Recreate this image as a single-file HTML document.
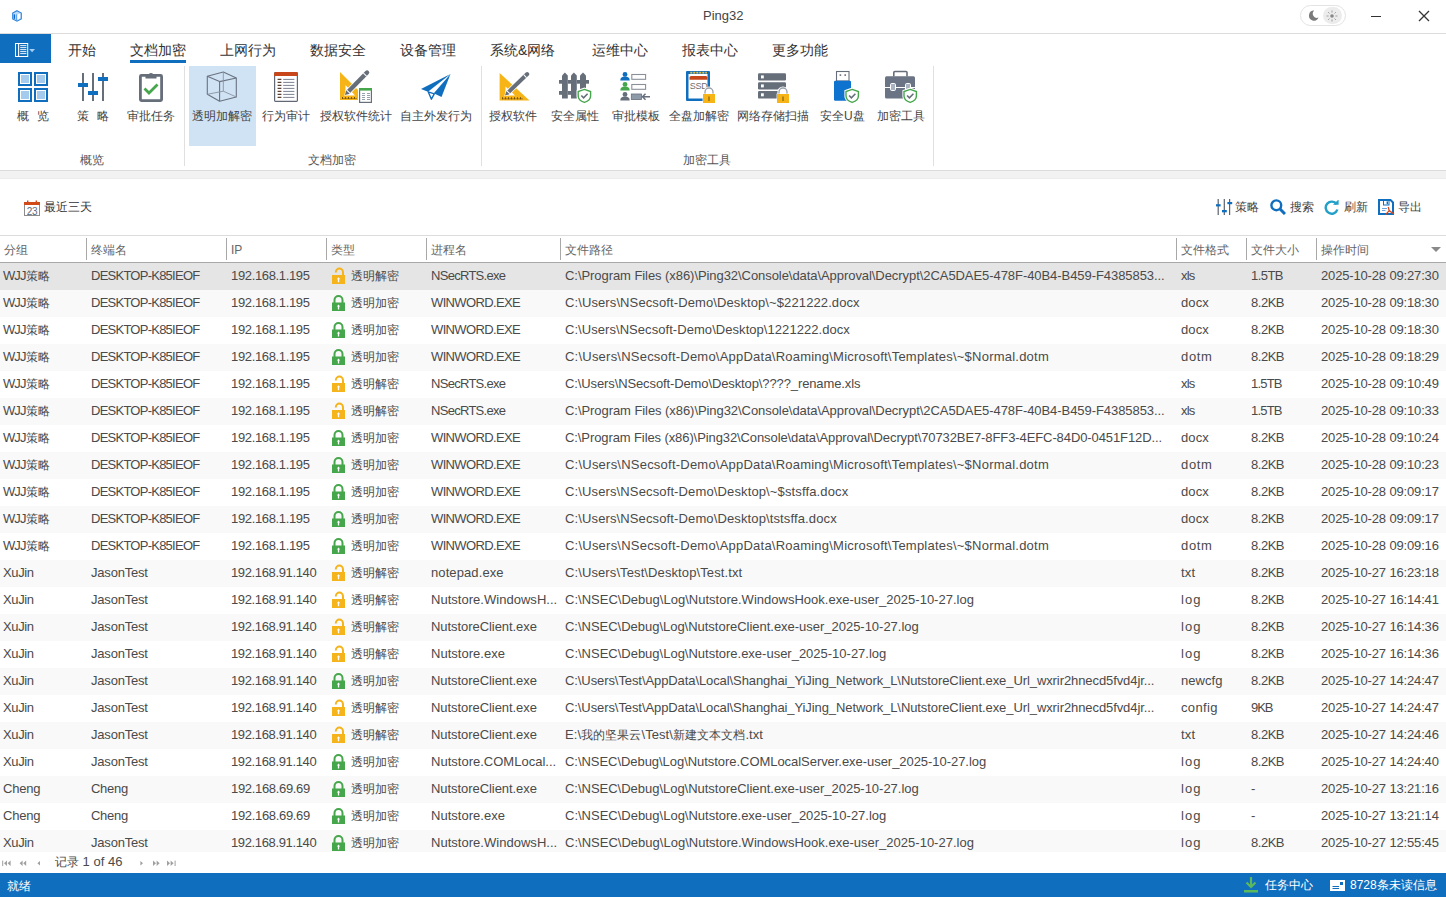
<!DOCTYPE html>
<html><head><meta charset="utf-8"><style>
*{box-sizing:border-box}
html,body{margin:0;padding:0}
body{width:1446px;height:897px;overflow:hidden;position:relative;background:#fff;font-family:"Liberation Sans",sans-serif;color:#333}
.a{position:absolute}
.t{position:absolute;white-space:nowrap}
.tab{position:absolute;top:41px;font-size:14px;line-height:18px;color:#333}
.rl{position:absolute;top:108px;font-size:12px;line-height:16px;color:#444;white-space:nowrap}
.gl{position:absolute;top:152px;font-size:12px;line-height:16px;color:#555;white-space:nowrap}
.sep{position:absolute;top:66px;width:1px;height:100px;background:#e0e0e0}
.hd{position:absolute;top:242px;font-size:12px;line-height:16px;color:#666;white-space:nowrap}
.hs{position:absolute;top:238px;width:1px;height:22px;background:#a8a8a8}
.row{position:absolute;left:0;width:1446px;height:27px}
.c{position:absolute;top:5px;font-size:13px;line-height:16px;color:#4a4a4a;white-space:nowrap}
.lk{position:absolute;left:332px;top:4px}
.tool{position:absolute;top:199px;font-size:12px;line-height:16px;color:#444;white-space:nowrap}
</style></head><body>

<svg class="a" style="left:12px;top:10px" width="10" height="12" viewBox="0 0 10 12">
<path d="M5 0.7L9.3 3V8.9L5 11.2L0.7 8.9V3Z" fill="#bcdaf6" stroke="#2d84dc" stroke-width="1.1"/>
<path d="M5.3 4.6L8.2 3.5V8.3L5.3 9.7Z" fill="#fff"/>
<path d="M2.4 4.4V8.8" stroke="#0b62c8" stroke-width="1.3"/>
<path d="M4.6 4.4V10.4" stroke="#4a98e6" stroke-width="0.9"/>
</svg>
<div class="t" style="left:703px;top:8px;font-size:13px;line-height:16px;color:#444">Ping32</div>
<div class="a" style="left:1300px;top:5px;width:46px;height:21px;border:1px solid #e3e3e3;border-radius:11px;background:#fff"></div>
<svg class="a" style="left:1308px;top:10px" width="11" height="11" viewBox="0 0 11 11"><path d="M6.2 0.6A5 5 0 1 0 10.6 7.6A4.2 4.2 0 0 1 6.2 0.6Z" fill="#7a7a7a"/></svg>
<div class="a" style="left:1323px;top:7px;width:19px;height:17px;border-radius:9px;background:#ececec"></div>
<svg class="a" style="left:1326px;top:10px" width="12" height="12" viewBox="0 0 12 12"><circle cx="6" cy="6" r="1.8" fill="#888"/><g stroke="#999" stroke-width="0.9"><path d="M6 0.5V2.6M6 9.4V11.5M0.5 6H2.6M9.4 6H11.5M2.1 2.1L3.5 3.5M8.5 8.5L9.9 9.9M2.1 9.9L3.5 8.5M8.5 3.5L9.9 2.1"/></g></svg>
<div class="a" style="left:1371px;top:16px;width:10px;height:1px;background:#333"></div>
<svg class="a" style="left:1418px;top:10px" width="12" height="12" viewBox="0 0 12 12"><path d="M1 1L11 11M11 1L1 11" stroke="#333" stroke-width="1.3"/></svg>
<div class="a" style="left:0;top:33px;width:1446px;height:1px;background:#dcdcdc"></div>

<div class="a" style="left:0;top:34px;width:51px;height:29px;background:#106ebe"></div>
<svg class="a" style="left:15px;top:43px" width="22" height="14" viewBox="0 0 22 14">
<rect x="0.5" y="0.5" width="12.2" height="13" fill="none" stroke="#fff" stroke-width="1"/>
<path d="M3.6 0.5V13.5" stroke="#fff" stroke-width="1.1"/>
<path d="M5.2 2.6H11.4M5.2 4.6H11.4M5.2 6.6H11.4M5.2 8.6H11.4M5.2 10.6H11.4" stroke="#fff" stroke-width="0.9"/>
<path d="M14.2 6H20L17.1 9.2Z" fill="#a8d0f4"/>
</svg>

<div class="tab" style="left:68px">开始</div>
<div class="tab" style="left:130px">文档加密</div>
<div class="tab" style="left:220px">上网行为</div>
<div class="tab" style="left:310px">数据安全</div>
<div class="tab" style="left:400px">设备管理</div>
<div class="tab" style="left:490px">系统&amp;网络</div>
<div class="tab" style="left:592px">运维中心</div>
<div class="tab" style="left:682px">报表中心</div>
<div class="tab" style="left:772px">更多功能</div>
<div class="a" style="left:130px;top:60px;width:56px;height:3px;background:#106ebe"></div>
<div class="a" style="left:189px;top:66px;width:67px;height:80px;background:#cfe3f5"></div>
<div class="sep" style="left:184px"></div>
<div class="sep" style="left:481px"></div>
<div class="sep" style="left:933px"></div>
<div class="a" style="left:0;top:170px;width:1446px;height:1px;background:#dcdcdc"></div>
<div class="a" style="left:0;top:171px;width:1446px;height:7px;background:#f2f2f2"></div>
<div class="a" style="left:0;top:178px;width:1446px;height:1px;background:#ebebeb"></div>
<svg class="a" style="left:18px;top:72px" width="30" height="30" viewBox="0 0 30 30">
<g fill="#a4cbee" stroke="#fff" stroke-width="1"><rect x="2.5" y="2.5" width="9" height="9"/><rect x="18.5" y="2.5" width="9" height="9"/><rect x="2.5" y="18.5" width="9" height="9"/><rect x="18.5" y="18.5" width="9" height="9"/></g>
<g fill="none" stroke="#106ebe" stroke-width="2"><rect x="1" y="1" width="12" height="12"/><rect x="17" y="1" width="12" height="12"/><rect x="1" y="17" width="12" height="12"/><rect x="17" y="17" width="12" height="12"/></g></svg>
<svg class="a" style="left:78px;top:72px" width="30" height="30" viewBox="0 0 30 30">
<g stroke="#666e7a" stroke-width="2"><path d="M5 1V29M15 1V29M25 1V29"/></g>
<g fill="#106ebe"><rect x="0" y="11" width="10" height="4"/><rect x="10" y="19" width="10" height="4"/><rect x="20" y="5" width="10" height="4"/></g></svg>
<svg class="a" style="left:139px;top:71px" width="24" height="31" viewBox="0 0 24 31">
<rect x="1.4" y="4.4" width="21.2" height="25.2" rx="1" fill="#fff" stroke="#666e7a" stroke-width="2.8"/>
<path d="M6.5 7.5V4.5H9.5A2.5 2.5 0 0 1 14.5 4.5H17.5V7.5Z" fill="#666e7a"/>
<path d="M5.5 17.5L10 22L18.5 13.5" fill="none" stroke="#46a64b" stroke-width="2.8"/></svg>
<svg class="a" style="left:206px;top:71px" width="32" height="32" viewBox="0 0 32 32">
<g fill="none" stroke="#6a7280" stroke-width="1.1" stroke-linejoin="round">
<path d="M17.3 1L30.3 7V26L13.6 30.3L1.3 23.3V5.2Z"/><path d="M1.3 5.2L13.6 10.6L30.3 7M13.6 10.6V30.3"/>
<path d="M17.3 1V20.2M1.3 23.3L17.3 20.2L30.3 26" stroke="#8a92a0" stroke-width="0.9"/></g></svg>
<svg class="a" style="left:274px;top:72px" width="24" height="30" viewBox="0 0 24 30">
<rect x="0.6" y="0.6" width="22.8" height="28.8" rx="0.8" fill="#fff" stroke="#606874" stroke-width="1.2"/>
<path d="M0 4V2A2 2 0 0 1 2 0H22A2 2 0 0 1 24 2V4Z" fill="#c8471a"/>
<g stroke="#5a4030" stroke-width="1.2"><path d="M3.6 7.4H7.4M3.6 10.4H7.4M3.6 13.4H7.4M3.6 16.4H7.4M3.6 19.4H7.4M3.6 22.4H7.4M3.6 25.4H7.4"/></g>
<g stroke="#7a8290" stroke-width="1"><path d="M9.2 7.4H20.4M9.2 10.4H20.4M9.2 13.4H20.4M9.2 16.4H20.4M9.2 19.4H20.4M9.2 22.4H20.4M9.2 25.4H20.4"/></g></svg>
<svg class="a" style="left:335px;top:66px" width="42" height="40" viewBox="0 0 42 40">
<path d="M5 6V34H23V24Z" fill="#f7b417"/>
<path d="M10.5 19V29.5H20Z" fill="#fff"/>
<g stroke="#6a4a10" stroke-width="0.9"><path d="M7.5 33V31M9 33V32M10.5 33V31M12 33V32M13.5 33V31M15 33V32M16.5 33V31M18 33V32M19.5 33V31M21 33V32"/></g>
<g transform="translate(10,29) rotate(-45.5)">
<path d="M-1 0L3.5 -3.0H31.5A3.0 3.0 0 0 1 31.5 3.0H3.5Z" fill="#fff"/>
<path d="M0 0L3.5 -2.2H31.5A2.2 2.2 0 0 1 31.5 2.2H3.5Z" fill="#666e7a"/>
<rect x="4.2" y="-2.2" width="1" height="4.4" fill="#fff"/><rect x="28" y="-2.2" width="1" height="4.4" fill="#fff"/></g>
<rect x="24.6" y="22.6" width="11.8" height="13.8" fill="#fff" stroke="#666e7a" stroke-width="1.2"/>
<rect x="24" y="22" width="13" height="2.6" fill="#46a64b"/>
<g stroke="#8a96a6" stroke-width="0.9"><path d="M27 27.5H30M32 27.5H35M27 29.5H30M32 29.5H35M27 31.5H30M32 31.5H35M27 33.5H30M32 33.5H35"/></g></svg>
<svg class="a" style="left:415px;top:66px" width="40" height="40" viewBox="0 0 40 40">
<path d="M35.5 8L6 23L13 25.8Z" fill="#106ebe"/>
<path d="M35.5 8L18.8 27.3L26.5 31Z" fill="#106ebe"/>
<path d="M13.2 25.8L16.4 33.2L19.3 27.8Z" fill="#fff" stroke="#106ebe" stroke-width="1.4" stroke-linejoin="round"/></svg>
<svg class="a" style="left:480px;top:66px" width="52" height="40" viewBox="0 0 52 40">
<path d="M19.6 7V34.6H49.5Z" fill="#f7b417"/>
<path d="M25.5 20.5V29.5H35Z" fill="#fff"/>
<g stroke="#6a4a10" stroke-width="0.9"><path d="M22.5 33.4V31.2M24 33.4V32.2M25.5 33.4V31.2M27 33.4V32.2M28.5 33.4V31.2M30 33.4V32.2M31.5 33.4V31.2M33 33.4V32.2M34.5 33.4V31.2M36 33.4V32.2M37.5 33.4V31.2M39 33.4V32.2M40.5 33.4V31.2M42 33.4V32.2"/></g>
<g transform="translate(25,29.5) rotate(-44)">
<path d="M-1 0L3.5 -2.8H30.9A2.8 2.8 0 0 1 30.9 2.8H3.5Z" fill="#fff"/>
<path d="M0 0L3.5 -2.0H30.9A2.0 2.0 0 0 1 30.9 2.0H3.5Z" fill="#666e7a"/>
<rect x="4.2" y="-2.0" width="1" height="4.0" fill="#fff"/><rect x="27.4" y="-2.0" width="1" height="4.0" fill="#fff"/></g></svg>
<svg class="a" style="left:555px;top:66px" width="40" height="40" viewBox="0 0 40 40">
<g fill="#666e7a"><path d="M7 9.5L9.9 6.5L12.8 9.5V32.6H7Z"/><path d="M16 9.5L18.9 6.5L21.8 9.5V32.6H16Z"/><path d="M25 9.5L28 6.5L31 9.5V24H25Z"/>
<rect x="4" y="14" width="3" height="3.7"/><rect x="12.8" y="14" width="3.2" height="3.7"/><rect x="21.8" y="14" width="3.2" height="3.7"/><rect x="31" y="14" width="3" height="3.7"/>
<rect x="4" y="25" width="3" height="3.8"/><rect x="12.8" y="25" width="3.2" height="3.8"/></g>
<path d="M29.4 21.5L37.2 24.3V30C37.2 34 33.6 36.8 29.4 38C25.2 36.8 21.6 34 21.6 30V24.3Z" fill="#fff"/>
<path d="M29.4 23.4L35.6 25.5V30C35.6 33 33 35.3 29.4 36.4C25.8 35.3 23.2 33 23.2 30V25.5Z" fill="#fff" stroke="#46a64b" stroke-width="1.4"/>
<path d="M26.3 29.5L28.6 31.8L32.6 27.8" fill="none" stroke="#666e7a" stroke-width="1.6"/></svg>
<svg class="a" style="left:615px;top:66px" width="40" height="40" viewBox="0 0 40 40">
<g><circle cx="10" cy="8.4" r="2.4" fill="#106ebe"/><path d="M5.3 14.6C5.3 11.6 7 10.6 10 10.6C13 10.6 14.7 11.6 14.7 14.6Z" fill="#106ebe"/>
<circle cx="10" cy="18.4" r="2.4" fill="#46a64b"/><path d="M5.3 24.6C5.3 21.6 7 20.6 10 20.6C13 20.6 14.7 21.6 14.7 24.6Z" fill="#46a64b"/>
<circle cx="10" cy="28.4" r="2.4" fill="#666e7a"/><path d="M5.3 34.6C5.3 31.6 7 30.6 10 30.6C13 30.6 14.7 31.6 14.7 34.6Z" fill="#666e7a"/></g>
<g fill="none" stroke="#8a8f98" stroke-width="1.1"><rect x="16.8" y="8.5" width="13.8" height="4.8"/><rect x="16.8" y="18.5" width="13.8" height="4.8"/></g>
<rect x="16.3" y="28" width="10.2" height="5.5" fill="#8e9aaa" stroke="#666e7a" stroke-width="0.8"/>
<path d="M35 30.8H27.5M30.5 27.8L27.5 30.8L30.5 33.8" fill="none" stroke="#666e7a" stroke-width="1.5"/></svg>
<svg class="a" style="left:680px;top:66px" width="40" height="40" viewBox="0 0 40 40">
<path d="M7 5H29A1 1 0 0 1 30 6V35H7A1 1 0 0 1 6 34V6A1 1 0 0 1 7 5Z" fill="#106ebe"/>
<rect x="8.5" y="8" width="19" height="24.5" fill="#fff"/>
<g fill="#e8c040"><rect x="10.3" y="5.8" width="2" height="1.8"/><rect x="13.3" y="5.8" width="2" height="1.8"/><rect x="16.3" y="5.8" width="2" height="1.8"/><rect x="19.3" y="5.8" width="2" height="1.8"/><rect x="22.3" y="5.8" width="2" height="1.8"/><rect x="25.3" y="5.8" width="1.6" height="1.8"/></g>
<path d="M9.5 13.8V11.5A1.5 1.5 0 0 1 11 10H26A1.5 1.5 0 0 1 27.5 11.5V13.8Z" fill="#c8471a"/>
<text x="18.6" y="23.3" font-family="Liberation Sans" font-size="9" fill="#6e6e6e" text-anchor="middle" letter-spacing="-0.3">SSD</text>
<path d="M25 29V26A4 4 0 0 1 33 26V29Z" fill="#fff" stroke="#fff" stroke-width="3.2"/>
<path d="M25 28V26A4 4 0 0 1 33 26V28" fill="none" stroke="#9aa0aa" stroke-width="1.3"/>
<rect x="22.6" y="27.6" width="12.8" height="9.8" fill="#fff"/>
<rect x="23" y="28" width="12" height="9" fill="#f7b417"/>
<path d="M29 30.5V35" stroke="#7a5a10" stroke-width="1.1"/></svg>
<svg class="a" style="left:750px;top:66px" width="40" height="40" viewBox="0 0 40 40">
<g fill="#666e7a"><rect x="8" y="7.3" width="28" height="7.2" rx="1.2"/><rect x="8" y="16.3" width="28" height="7.2" rx="1.2"/><rect x="8" y="25" width="28" height="7.6" rx="1.2"/></g>
<g fill="#fff"><rect x="11" y="9.4" width="2.8" height="3"/><rect x="11" y="18.4" width="2.8" height="3"/><rect x="11" y="27.3" width="2.8" height="3"/></g>
<path d="M29 29V26A4 4 0 0 1 37 26V29Z" fill="#fff" stroke="#fff" stroke-width="3.2"/>
<path d="M29 28V26A4 4 0 0 1 37 26V28" fill="none" stroke="#9aa0aa" stroke-width="1.3"/>
<rect x="26.6" y="27.6" width="12.8" height="9.8" fill="#fff"/>
<rect x="27" y="28" width="12" height="9" fill="#f7b417"/>
<path d="M33 30.5V35" stroke="#7a5a10" stroke-width="1.1"/></svg>
<svg class="a" style="left:825px;top:66px" width="40" height="40" viewBox="0 0 40 40">
<rect x="11.5" y="5.5" width="12.5" height="9.5" fill="#fff" stroke="#666e7a" stroke-width="1.1"/>
<g fill="#666e7a"><rect x="14.6" y="8.3" width="1.6" height="1.6"/><rect x="19.4" y="8.3" width="1.6" height="1.6"/></g>
<rect x="9" y="14.8" width="17" height="20" rx="1.2" fill="#0e72cf"/>
<path d="M27.2 21.5L35.0 24.3V30.0C35.0 34.0 31.4 36.8 27.2 38.0C23.0 36.8 19.4 34.0 19.4 30.0V24.3Z" fill="#fff"/>
<path d="M27.2 23.400000000000002L33.4 25.5V30.0C33.4 33.0 30.8 35.3 27.2 36.4C23.599999999999998 35.3 21.0 33.0 21.0 30.0V25.5Z" fill="#fff" stroke="#46a64b" stroke-width="1.4"/>
<path d="M24.099999999999998 29.5L26.4 31.8L30.4 27.8" fill="none" stroke="#666e7a" stroke-width="1.6"/></svg>
<svg class="a" style="left:880px;top:66px" width="40" height="40" viewBox="0 0 40 40">
<path d="M13.8 10.5V6.5A1 1 0 0 1 14.8 5.5H26A1 1 0 0 1 27 6.5V10.5" fill="none" stroke="#666e7a" stroke-width="1.6"/>
<rect x="5" y="10.3" width="30" height="22.2" rx="1.5" fill="#6a7484"/>
<path d="M5 21.5H35" stroke="#fff" stroke-width="1"/>
<g fill="#a8b2c0" stroke="#fff" stroke-width="1"><rect x="10.5" y="17.5" width="5" height="7" rx="1.2"/><rect x="25.5" y="17.5" width="5" height="7" rx="1.2"/></g>
<path d="M30.2 21.5L38.0 24.3V30.0C38.0 34.0 34.4 36.8 30.2 38.0C26.0 36.8 22.4 34.0 22.4 30.0V24.3Z" fill="#fff"/>
<path d="M30.2 23.400000000000002L36.4 25.5V30.0C36.4 33.0 33.8 35.3 30.2 36.4C26.599999999999998 35.3 24.0 33.0 24.0 30.0V25.5Z" fill="#fff" stroke="#46a64b" stroke-width="1.4"/>
<path d="M27.099999999999998 29.5L29.4 31.8L33.4 27.8" fill="none" stroke="#666e7a" stroke-width="1.6"/></svg>
<div class="rl" style="left:17px;width:32px">概<span style="margin-left:8px">览</span></div>
<div class="rl" style="left:77px;width:32px">策<span style="margin-left:8px">略</span></div>
<div class="rl" style="left:127px;width:48px">审批任务</div>
<div class="rl" style="left:192px;width:60px">透明加解密</div>
<div class="rl" style="left:262px;width:48px">行为审计</div>
<div class="rl" style="left:320px;width:72px">授权软件统计</div>
<div class="rl" style="left:400px;width:72px">自主外发行为</div>
<div class="rl" style="left:489px;width:48px">授权软件</div>
<div class="rl" style="left:551px;width:48px">安全属性</div>
<div class="rl" style="left:612px;width:48px">审批模板</div>
<div class="rl" style="left:669px;width:60px">全盘加解密</div>
<div class="rl" style="left:737px;width:72px">网络存储扫描</div>
<div class="rl" style="left:820px;width:45px">安全U盘</div>
<div class="rl" style="left:877px;width:48px">加密工具</div>
<div class="gl" style="left:80px">概览</div>
<div class="gl" style="left:308px">文档加密</div>
<div class="gl" style="left:683px">加密工具</div>
<svg class="a" style="left:24px;top:200px" width="17" height="16" viewBox="0 0 17 16">
<rect x="0.5" y="2.5" width="15" height="13" fill="#fff" stroke="#8c8c8c" stroke-width="1"/>
<rect x="0" y="2" width="16" height="3" fill="#d04a1a"/>
<g fill="#d04a1a"><rect x="3" y="0.5" width="1.4" height="2"/><rect x="11.6" y="0.5" width="1.4" height="2"/></g>
<text x="8" y="14.6" font-family="Liberation Sans" font-size="10" fill="#5a6a80" text-anchor="middle" letter-spacing="-0.4">23</text></svg>
<div class="t" style="left:44px;top:199px;font-size:12px;line-height:16px;color:#333">最近三天</div>

<svg class="a" style="left:1215px;top:199px" width="18" height="16" viewBox="0 0 18 16">
<g stroke="#5a626e" stroke-width="1.2"><path d="M3.2 0V16M9.3 0V16M14.6 0V16"/></g>
<g fill="#106ebe"><rect x="1" y="5.2" width="4.6" height="2.2"/><rect x="7" y="11" width="4.8" height="2.3"/><rect x="12.4" y="3" width="4.8" height="2.2"/></g></svg>
<div class="tool" style="left:1235px">策略</div>
<svg class="a" style="left:1270px;top:199px" width="16" height="16" viewBox="0 0 16 16">
<circle cx="6.3" cy="6.3" r="4.9" fill="none" stroke="#106ebe" stroke-width="2.4"/><path d="M9.8 9.8L15 15" stroke="#106ebe" stroke-width="3"/></svg>
<div class="tool" style="left:1290px">搜索</div>
<svg class="a" style="left:1324px;top:200px" width="15" height="15" viewBox="0 0 15 15">
<path d="M12.6 4.2A6 6 0 1 0 13.4 9.5" fill="none" stroke="#23a0c8" stroke-width="2.4"/><path d="M9 4.8H14.6V-0.6Z" fill="#23a0c8"/></svg>
<div class="tool" style="left:1344px">刷新</div>
<svg class="a" style="left:1378px;top:199px" width="17" height="17" viewBox="0 0 17 17">
<path d="M1 1H12.5L15 3.5V15H1Z" fill="#fff" stroke="#106ebe" stroke-width="2"/>
<rect x="5.5" y="1.5" width="5.5" height="4.5" fill="#fff" stroke="#106ebe" stroke-width="1"/><rect x="8.6" y="2.4" width="1.4" height="2.8" fill="#106ebe"/>
<path d="M4 9.5H9M4 11.5H7.5" stroke="#6aa6e0" stroke-width="1"/>
<path d="M10.2 8L11.2 11.6M11.2 11.6L7.6 15.6M11.2 11.6L16 15" stroke="#d2481e" stroke-width="1.3" fill="none"/></svg>
<div class="tool" style="left:1398px">导出</div>

<div class="a" style="left:0;top:235px;width:1446px;height:1px;background:#dcdcdc"></div>
<div class="a" style="left:0;top:262px;width:1446px;height:1px;background:#a8a8a8"></div>
<div class="hd" style="left:4px">分组</div>
<div class="hd" style="left:91px">终端名</div>
<div class="hs" style="left:86px"></div>
<div class="hd" style="left:231px">IP</div>
<div class="hs" style="left:226px"></div>
<div class="hd" style="left:331px">类型</div>
<div class="hs" style="left:326px"></div>
<div class="hd" style="left:431px">进程名</div>
<div class="hs" style="left:426px"></div>
<div class="hd" style="left:565px">文件路径</div>
<div class="hs" style="left:560px"></div>
<div class="hd" style="left:1181px">文件格式</div>
<div class="hs" style="left:1176px"></div>
<div class="hd" style="left:1251px">文件大小</div>
<div class="hs" style="left:1246px"></div>
<div class="hd" style="left:1321px">操作时间</div>
<div class="hs" style="left:1316px"></div>
<svg class="a" style="left:1431px;top:247px" width="10" height="5" viewBox="0 0 10 5"><path d="M0 0H10L5 5Z" fill="#8a8a8a"/></svg>
<div class="row" style="top:263px;height:27px;overflow:hidden;background:#e5e5e5">
<div class="c" style="left:3px"><span style="letter-spacing:-0.9px">WJJ</span><span style="font-size:12px">策略</span></div>
<div class="c" style="left:91px;letter-spacing:-0.750px">DESKTOP-K85IEOF</div>
<div class="c" style="left:231px;letter-spacing:-0.350px">192.168.1.195</div>
<svg class="lk" width="14" height="17" viewBox="0 0 14 17"><path d="M3.8 5.6V5.2A3.6 3.6 0 0 1 11 5.2V8.5" fill="none" stroke="#f5b31c" stroke-width="2"/><rect x="0" y="8" width="13" height="9" fill="#f5b31c"/><path d="M6.5 10.2l-1.7 2h1.05v3h1.3v-3h1.05z" fill="#fff"/></svg>
<div class="c" style="left:351px;font-size:12px">透明解密</div>
<div class="c" style="left:431px;letter-spacing:-0.710px">NSecRTS.exe</div>
<div class="c" style="left:565px;letter-spacing:-0.062px">C:\Program Files (x86)\Ping32\Console\data\Approval\Decrypt\2CA5DAE5-478F-40B4-B459-F4385853...</div>
<div class="c" style="left:1181px;letter-spacing:-0.800px">xls</div>
<div class="c" style="left:1251px;letter-spacing:-0.550px">1.5TB</div>
<div class="c" style="left:1321px;letter-spacing:-0.156px">2025-10-28 09:27:30</div>
</div>
<div class="row" style="top:290px;height:27px;overflow:hidden;background:#f9f9f9">
<div class="c" style="left:3px"><span style="letter-spacing:-0.9px">WJJ</span><span style="font-size:12px">策略</span></div>
<div class="c" style="left:91px;letter-spacing:-0.750px">DESKTOP-K85IEOF</div>
<div class="c" style="left:231px;letter-spacing:-0.350px">192.168.1.195</div>
<svg class="lk" width="14" height="17" viewBox="0 0 14 17"><path d="M2.5 9V6A4 4 0 0 1 10.5 6V9" fill="none" stroke="#46a64b" stroke-width="2"/><rect x="0" y="8.5" width="13" height="8.5" fill="#46a64b"/><path d="M6.5 10.5l-1.7 2h1.05v3h1.3v-3h1.05z" fill="#fff"/></svg>
<div class="c" style="left:351px;font-size:12px">透明加密</div>
<div class="c" style="left:431px;letter-spacing:-0.640px">WINWORD.EXE</div>
<div class="c" style="left:565px;letter-spacing:0.105px">C:\Users\NSecsoft-Demo\Desktop\~$221222.docx</div>
<div class="c" style="left:1181px;letter-spacing:0.133px">docx</div>
<div class="c" style="left:1251px;letter-spacing:-0.475px">8.2KB</div>
<div class="c" style="left:1321px;letter-spacing:-0.156px">2025-10-28 09:18:30</div>
</div>
<div class="row" style="top:317px;height:27px;overflow:hidden;background:#ffffff">
<div class="c" style="left:3px"><span style="letter-spacing:-0.9px">WJJ</span><span style="font-size:12px">策略</span></div>
<div class="c" style="left:91px;letter-spacing:-0.750px">DESKTOP-K85IEOF</div>
<div class="c" style="left:231px;letter-spacing:-0.350px">192.168.1.195</div>
<svg class="lk" width="14" height="17" viewBox="0 0 14 17"><path d="M2.5 9V6A4 4 0 0 1 10.5 6V9" fill="none" stroke="#46a64b" stroke-width="2"/><rect x="0" y="8.5" width="13" height="8.5" fill="#46a64b"/><path d="M6.5 10.5l-1.7 2h1.05v3h1.3v-3h1.05z" fill="#fff"/></svg>
<div class="c" style="left:351px;font-size:12px">透明加密</div>
<div class="c" style="left:431px;letter-spacing:-0.640px">WINWORD.EXE</div>
<div class="c" style="left:565px;letter-spacing:0.055px">C:\Users\NSecsoft-Demo\Desktop\1221222.docx</div>
<div class="c" style="left:1181px;letter-spacing:0.133px">docx</div>
<div class="c" style="left:1251px;letter-spacing:-0.475px">8.2KB</div>
<div class="c" style="left:1321px;letter-spacing:-0.156px">2025-10-28 09:18:30</div>
</div>
<div class="row" style="top:344px;height:27px;overflow:hidden;background:#f9f9f9">
<div class="c" style="left:3px"><span style="letter-spacing:-0.9px">WJJ</span><span style="font-size:12px">策略</span></div>
<div class="c" style="left:91px;letter-spacing:-0.750px">DESKTOP-K85IEOF</div>
<div class="c" style="left:231px;letter-spacing:-0.350px">192.168.1.195</div>
<svg class="lk" width="14" height="17" viewBox="0 0 14 17"><path d="M2.5 9V6A4 4 0 0 1 10.5 6V9" fill="none" stroke="#46a64b" stroke-width="2"/><rect x="0" y="8.5" width="13" height="8.5" fill="#46a64b"/><path d="M6.5 10.5l-1.7 2h1.05v3h1.3v-3h1.05z" fill="#fff"/></svg>
<div class="c" style="left:351px;font-size:12px">透明加密</div>
<div class="c" style="left:431px;letter-spacing:-0.640px">WINWORD.EXE</div>
<div class="c" style="left:565px;letter-spacing:0.224px">C:\Users\NSecsoft-Demo\AppData\Roaming\Microsoft\Templates\~$Normal.dotm</div>
<div class="c" style="left:1181px;letter-spacing:0.667px">dotm</div>
<div class="c" style="left:1251px;letter-spacing:-0.475px">8.2KB</div>
<div class="c" style="left:1321px;letter-spacing:-0.156px">2025-10-28 09:18:29</div>
</div>
<div class="row" style="top:371px;height:27px;overflow:hidden;background:#ffffff">
<div class="c" style="left:3px"><span style="letter-spacing:-0.9px">WJJ</span><span style="font-size:12px">策略</span></div>
<div class="c" style="left:91px;letter-spacing:-0.750px">DESKTOP-K85IEOF</div>
<div class="c" style="left:231px;letter-spacing:-0.350px">192.168.1.195</div>
<svg class="lk" width="14" height="17" viewBox="0 0 14 17"><path d="M3.8 5.6V5.2A3.6 3.6 0 0 1 11 5.2V8.5" fill="none" stroke="#f5b31c" stroke-width="2"/><rect x="0" y="8" width="13" height="9" fill="#f5b31c"/><path d="M6.5 10.2l-1.7 2h1.05v3h1.3v-3h1.05z" fill="#fff"/></svg>
<div class="c" style="left:351px;font-size:12px">透明解密</div>
<div class="c" style="left:431px;letter-spacing:-0.710px">NSecRTS.exe</div>
<div class="c" style="left:565px;letter-spacing:-0.113px">C:\Users\NSecsoft-Demo\Desktop\????_rename.xls</div>
<div class="c" style="left:1181px;letter-spacing:-0.800px">xls</div>
<div class="c" style="left:1251px;letter-spacing:-0.800px">1.5TB</div>
<div class="c" style="left:1321px;letter-spacing:-0.156px">2025-10-28 09:10:49</div>
</div>
<div class="row" style="top:398px;height:27px;overflow:hidden;background:#f9f9f9">
<div class="c" style="left:3px"><span style="letter-spacing:-0.9px">WJJ</span><span style="font-size:12px">策略</span></div>
<div class="c" style="left:91px;letter-spacing:-0.750px">DESKTOP-K85IEOF</div>
<div class="c" style="left:231px;letter-spacing:-0.350px">192.168.1.195</div>
<svg class="lk" width="14" height="17" viewBox="0 0 14 17"><path d="M3.8 5.6V5.2A3.6 3.6 0 0 1 11 5.2V8.5" fill="none" stroke="#f5b31c" stroke-width="2"/><rect x="0" y="8" width="13" height="9" fill="#f5b31c"/><path d="M6.5 10.2l-1.7 2h1.05v3h1.3v-3h1.05z" fill="#fff"/></svg>
<div class="c" style="left:351px;font-size:12px">透明解密</div>
<div class="c" style="left:431px;letter-spacing:-0.710px">NSecRTS.exe</div>
<div class="c" style="left:565px;letter-spacing:-0.062px">C:\Program Files (x86)\Ping32\Console\data\Approval\Decrypt\2CA5DAE5-478F-40B4-B459-F4385853...</div>
<div class="c" style="left:1181px;letter-spacing:-0.800px">xls</div>
<div class="c" style="left:1251px;letter-spacing:-0.800px">1.5TB</div>
<div class="c" style="left:1321px;letter-spacing:-0.156px">2025-10-28 09:10:33</div>
</div>
<div class="row" style="top:425px;height:27px;overflow:hidden;background:#ffffff">
<div class="c" style="left:3px"><span style="letter-spacing:-0.9px">WJJ</span><span style="font-size:12px">策略</span></div>
<div class="c" style="left:91px;letter-spacing:-0.750px">DESKTOP-K85IEOF</div>
<div class="c" style="left:231px;letter-spacing:-0.350px">192.168.1.195</div>
<svg class="lk" width="14" height="17" viewBox="0 0 14 17"><path d="M2.5 9V6A4 4 0 0 1 10.5 6V9" fill="none" stroke="#46a64b" stroke-width="2"/><rect x="0" y="8.5" width="13" height="8.5" fill="#46a64b"/><path d="M6.5 10.5l-1.7 2h1.05v3h1.3v-3h1.05z" fill="#fff"/></svg>
<div class="c" style="left:351px;font-size:12px">透明加密</div>
<div class="c" style="left:431px;letter-spacing:-0.640px">WINWORD.EXE</div>
<div class="c" style="left:565px;letter-spacing:-0.097px">C:\Program Files (x86)\Ping32\Console\data\Approval\Decrypt\70732BE7-8FF3-4EFC-84D0-0451F12D...</div>
<div class="c" style="left:1181px;letter-spacing:0.133px">docx</div>
<div class="c" style="left:1251px;letter-spacing:-0.475px">8.2KB</div>
<div class="c" style="left:1321px;letter-spacing:-0.156px">2025-10-28 09:10:24</div>
</div>
<div class="row" style="top:452px;height:27px;overflow:hidden;background:#f9f9f9">
<div class="c" style="left:3px"><span style="letter-spacing:-0.9px">WJJ</span><span style="font-size:12px">策略</span></div>
<div class="c" style="left:91px;letter-spacing:-0.750px">DESKTOP-K85IEOF</div>
<div class="c" style="left:231px;letter-spacing:-0.350px">192.168.1.195</div>
<svg class="lk" width="14" height="17" viewBox="0 0 14 17"><path d="M2.5 9V6A4 4 0 0 1 10.5 6V9" fill="none" stroke="#46a64b" stroke-width="2"/><rect x="0" y="8.5" width="13" height="8.5" fill="#46a64b"/><path d="M6.5 10.5l-1.7 2h1.05v3h1.3v-3h1.05z" fill="#fff"/></svg>
<div class="c" style="left:351px;font-size:12px">透明加密</div>
<div class="c" style="left:431px;letter-spacing:-0.640px">WINWORD.EXE</div>
<div class="c" style="left:565px;letter-spacing:0.224px">C:\Users\NSecsoft-Demo\AppData\Roaming\Microsoft\Templates\~$Normal.dotm</div>
<div class="c" style="left:1181px;letter-spacing:0.667px">dotm</div>
<div class="c" style="left:1251px;letter-spacing:-0.475px">8.2KB</div>
<div class="c" style="left:1321px;letter-spacing:-0.156px">2025-10-28 09:10:23</div>
</div>
<div class="row" style="top:479px;height:27px;overflow:hidden;background:#ffffff">
<div class="c" style="left:3px"><span style="letter-spacing:-0.9px">WJJ</span><span style="font-size:12px">策略</span></div>
<div class="c" style="left:91px;letter-spacing:-0.750px">DESKTOP-K85IEOF</div>
<div class="c" style="left:231px;letter-spacing:-0.350px">192.168.1.195</div>
<svg class="lk" width="14" height="17" viewBox="0 0 14 17"><path d="M2.5 9V6A4 4 0 0 1 10.5 6V9" fill="none" stroke="#46a64b" stroke-width="2"/><rect x="0" y="8.5" width="13" height="8.5" fill="#46a64b"/><path d="M6.5 10.5l-1.7 2h1.05v3h1.3v-3h1.05z" fill="#fff"/></svg>
<div class="c" style="left:351px;font-size:12px">透明加密</div>
<div class="c" style="left:431px;letter-spacing:-0.640px">WINWORD.EXE</div>
<div class="c" style="left:565px;letter-spacing:0.130px">C:\Users\NSecsoft-Demo\Desktop\~$stsffa.docx</div>
<div class="c" style="left:1181px;letter-spacing:0.133px">docx</div>
<div class="c" style="left:1251px;letter-spacing:-0.475px">8.2KB</div>
<div class="c" style="left:1321px;letter-spacing:-0.156px">2025-10-28 09:09:17</div>
</div>
<div class="row" style="top:506px;height:27px;overflow:hidden;background:#f9f9f9">
<div class="c" style="left:3px"><span style="letter-spacing:-0.9px">WJJ</span><span style="font-size:12px">策略</span></div>
<div class="c" style="left:91px;letter-spacing:-0.750px">DESKTOP-K85IEOF</div>
<div class="c" style="left:231px;letter-spacing:-0.350px">192.168.1.195</div>
<svg class="lk" width="14" height="17" viewBox="0 0 14 17"><path d="M2.5 9V6A4 4 0 0 1 10.5 6V9" fill="none" stroke="#46a64b" stroke-width="2"/><rect x="0" y="8.5" width="13" height="8.5" fill="#46a64b"/><path d="M6.5 10.5l-1.7 2h1.05v3h1.3v-3h1.05z" fill="#fff"/></svg>
<div class="c" style="left:351px;font-size:12px">透明加密</div>
<div class="c" style="left:431px;letter-spacing:-0.640px">WINWORD.EXE</div>
<div class="c" style="left:565px;letter-spacing:0.126px">C:\Users\NSecsoft-Demo\Desktop\tstsffa.docx</div>
<div class="c" style="left:1181px;letter-spacing:0.133px">docx</div>
<div class="c" style="left:1251px;letter-spacing:-0.475px">8.2KB</div>
<div class="c" style="left:1321px;letter-spacing:-0.156px">2025-10-28 09:09:17</div>
</div>
<div class="row" style="top:533px;height:27px;overflow:hidden;background:#ffffff">
<div class="c" style="left:3px"><span style="letter-spacing:-0.9px">WJJ</span><span style="font-size:12px">策略</span></div>
<div class="c" style="left:91px;letter-spacing:-0.750px">DESKTOP-K85IEOF</div>
<div class="c" style="left:231px;letter-spacing:-0.350px">192.168.1.195</div>
<svg class="lk" width="14" height="17" viewBox="0 0 14 17"><path d="M2.5 9V6A4 4 0 0 1 10.5 6V9" fill="none" stroke="#46a64b" stroke-width="2"/><rect x="0" y="8.5" width="13" height="8.5" fill="#46a64b"/><path d="M6.5 10.5l-1.7 2h1.05v3h1.3v-3h1.05z" fill="#fff"/></svg>
<div class="c" style="left:351px;font-size:12px">透明加密</div>
<div class="c" style="left:431px;letter-spacing:-0.640px">WINWORD.EXE</div>
<div class="c" style="left:565px;letter-spacing:0.224px">C:\Users\NSecsoft-Demo\AppData\Roaming\Microsoft\Templates\~$Normal.dotm</div>
<div class="c" style="left:1181px;letter-spacing:0.667px">dotm</div>
<div class="c" style="left:1251px;letter-spacing:-0.475px">8.2KB</div>
<div class="c" style="left:1321px;letter-spacing:-0.156px">2025-10-28 09:09:16</div>
</div>
<div class="row" style="top:560px;height:27px;overflow:hidden;background:#f9f9f9">
<div class="c" style="left:3px;letter-spacing:-0.375px">XuJin</div>
<div class="c" style="left:91px;letter-spacing:-0.200px">JasonTest</div>
<div class="c" style="left:231px;letter-spacing:-0.362px">192.168.91.140</div>
<svg class="lk" width="14" height="17" viewBox="0 0 14 17"><path d="M3.8 5.6V5.2A3.6 3.6 0 0 1 11 5.2V8.5" fill="none" stroke="#f5b31c" stroke-width="2"/><rect x="0" y="8" width="13" height="9" fill="#f5b31c"/><path d="M6.5 10.2l-1.7 2h1.05v3h1.3v-3h1.05z" fill="#fff"/></svg>
<div class="c" style="left:351px;font-size:12px">透明解密</div>
<div class="c" style="left:431px;letter-spacing:0.100px">notepad.exe</div>
<div class="c" style="left:565px;letter-spacing:0.103px">C:\Users\Test\Desktop\Test.txt</div>
<div class="c" style="left:1181px;letter-spacing:0.150px">txt</div>
<div class="c" style="left:1251px;letter-spacing:-0.475px">8.2KB</div>
<div class="c" style="left:1321px;letter-spacing:-0.156px">2025-10-27 16:23:18</div>
</div>
<div class="row" style="top:587px;height:27px;overflow:hidden;background:#ffffff">
<div class="c" style="left:3px;letter-spacing:-0.375px">XuJin</div>
<div class="c" style="left:91px;letter-spacing:-0.200px">JasonTest</div>
<div class="c" style="left:231px;letter-spacing:-0.362px">192.168.91.140</div>
<svg class="lk" width="14" height="17" viewBox="0 0 14 17"><path d="M3.8 5.6V5.2A3.6 3.6 0 0 1 11 5.2V8.5" fill="none" stroke="#f5b31c" stroke-width="2"/><rect x="0" y="8" width="13" height="9" fill="#f5b31c"/><path d="M6.5 10.2l-1.7 2h1.05v3h1.3v-3h1.05z" fill="#fff"/></svg>
<div class="c" style="left:351px;font-size:12px">透明解密</div>
<div class="c" style="left:431px;letter-spacing:0.026px">Nutstore.WindowsH...</div>
<div class="c" style="left:565px;letter-spacing:0.011px">C:\NSEC\Debug\Log\Nutstore.WindowsHook.exe-user_2025-10-27.log</div>
<div class="c" style="left:1181px;letter-spacing:1.100px">log</div>
<div class="c" style="left:1251px;letter-spacing:-0.475px">8.2KB</div>
<div class="c" style="left:1321px;letter-spacing:-0.156px">2025-10-27 16:14:41</div>
</div>
<div class="row" style="top:614px;height:27px;overflow:hidden;background:#f9f9f9">
<div class="c" style="left:3px;letter-spacing:-0.375px">XuJin</div>
<div class="c" style="left:91px;letter-spacing:-0.200px">JasonTest</div>
<div class="c" style="left:231px;letter-spacing:-0.362px">192.168.91.140</div>
<svg class="lk" width="14" height="17" viewBox="0 0 14 17"><path d="M3.8 5.6V5.2A3.6 3.6 0 0 1 11 5.2V8.5" fill="none" stroke="#f5b31c" stroke-width="2"/><rect x="0" y="8" width="13" height="9" fill="#f5b31c"/><path d="M6.5 10.2l-1.7 2h1.05v3h1.3v-3h1.05z" fill="#fff"/></svg>
<div class="c" style="left:351px;font-size:12px">透明解密</div>
<div class="c" style="left:431px;letter-spacing:-0.059px">NutstoreClient.exe</div>
<div class="c" style="left:565px;letter-spacing:-0.020px">C:\NSEC\Debug\Log\NutstoreClient.exe-user_2025-10-27.log</div>
<div class="c" style="left:1181px;letter-spacing:1.100px">log</div>
<div class="c" style="left:1251px;letter-spacing:-0.475px">8.2KB</div>
<div class="c" style="left:1321px;letter-spacing:-0.156px">2025-10-27 16:14:36</div>
</div>
<div class="row" style="top:641px;height:27px;overflow:hidden;background:#ffffff">
<div class="c" style="left:3px;letter-spacing:-0.375px">XuJin</div>
<div class="c" style="left:91px;letter-spacing:-0.200px">JasonTest</div>
<div class="c" style="left:231px;letter-spacing:-0.362px">192.168.91.140</div>
<svg class="lk" width="14" height="17" viewBox="0 0 14 17"><path d="M3.8 5.6V5.2A3.6 3.6 0 0 1 11 5.2V8.5" fill="none" stroke="#f5b31c" stroke-width="2"/><rect x="0" y="8" width="13" height="9" fill="#f5b31c"/><path d="M6.5 10.2l-1.7 2h1.05v3h1.3v-3h1.05z" fill="#fff"/></svg>
<div class="c" style="left:351px;font-size:12px">透明解密</div>
<div class="c" style="left:431px;letter-spacing:0.027px">Nutstore.exe</div>
<div class="c" style="left:565px;letter-spacing:-0.006px">C:\NSEC\Debug\Log\Nutstore.exe-user_2025-10-27.log</div>
<div class="c" style="left:1181px;letter-spacing:1.100px">log</div>
<div class="c" style="left:1251px;letter-spacing:-0.475px">8.2KB</div>
<div class="c" style="left:1321px;letter-spacing:-0.156px">2025-10-27 16:14:36</div>
</div>
<div class="row" style="top:668px;height:27px;overflow:hidden;background:#f9f9f9">
<div class="c" style="left:3px;letter-spacing:-0.375px">XuJin</div>
<div class="c" style="left:91px;letter-spacing:-0.200px">JasonTest</div>
<div class="c" style="left:231px;letter-spacing:-0.362px">192.168.91.140</div>
<svg class="lk" width="14" height="17" viewBox="0 0 14 17"><path d="M2.5 9V6A4 4 0 0 1 10.5 6V9" fill="none" stroke="#46a64b" stroke-width="2"/><rect x="0" y="8.5" width="13" height="8.5" fill="#46a64b"/><path d="M6.5 10.5l-1.7 2h1.05v3h1.3v-3h1.05z" fill="#fff"/></svg>
<div class="c" style="left:351px;font-size:12px">透明加密</div>
<div class="c" style="left:431px;letter-spacing:-0.059px">NutstoreClient.exe</div>
<div class="c" style="left:565px;letter-spacing:-0.087px">C:\Users\Test\AppData\Local\Shanghai_YiJing_Network_L\NutstoreClient.exe_Url_wxrir2hnecd5fvd4jr...</div>
<div class="c" style="left:1181px;letter-spacing:0.060px">newcfg</div>
<div class="c" style="left:1251px;letter-spacing:-0.475px">8.2KB</div>
<div class="c" style="left:1321px;letter-spacing:-0.156px">2025-10-27 14:24:47</div>
</div>
<div class="row" style="top:695px;height:27px;overflow:hidden;background:#ffffff">
<div class="c" style="left:3px;letter-spacing:-0.375px">XuJin</div>
<div class="c" style="left:91px;letter-spacing:-0.200px">JasonTest</div>
<div class="c" style="left:231px;letter-spacing:-0.362px">192.168.91.140</div>
<svg class="lk" width="14" height="17" viewBox="0 0 14 17"><path d="M3.8 5.6V5.2A3.6 3.6 0 0 1 11 5.2V8.5" fill="none" stroke="#f5b31c" stroke-width="2"/><rect x="0" y="8" width="13" height="9" fill="#f5b31c"/><path d="M6.5 10.2l-1.7 2h1.05v3h1.3v-3h1.05z" fill="#fff"/></svg>
<div class="c" style="left:351px;font-size:12px">透明解密</div>
<div class="c" style="left:431px;letter-spacing:-0.059px">NutstoreClient.exe</div>
<div class="c" style="left:565px;letter-spacing:-0.087px">C:\Users\Test\AppData\Local\Shanghai_YiJing_Network_L\NutstoreClient.exe_Url_wxrir2hnecd5fvd4jr...</div>
<div class="c" style="left:1181px;letter-spacing:0.340px">config</div>
<div class="c" style="left:1251px;letter-spacing:-1.100px">9KB</div>
<div class="c" style="left:1321px;letter-spacing:-0.156px">2025-10-27 14:24:47</div>
</div>
<div class="row" style="top:722px;height:27px;overflow:hidden;background:#f9f9f9">
<div class="c" style="left:3px;letter-spacing:-0.375px">XuJin</div>
<div class="c" style="left:91px;letter-spacing:-0.200px">JasonTest</div>
<div class="c" style="left:231px;letter-spacing:-0.362px">192.168.91.140</div>
<svg class="lk" width="14" height="17" viewBox="0 0 14 17"><path d="M3.8 5.6V5.2A3.6 3.6 0 0 1 11 5.2V8.5" fill="none" stroke="#f5b31c" stroke-width="2"/><rect x="0" y="8" width="13" height="9" fill="#f5b31c"/><path d="M6.5 10.2l-1.7 2h1.05v3h1.3v-3h1.05z" fill="#fff"/></svg>
<div class="c" style="left:351px;font-size:12px">透明解密</div>
<div class="c" style="left:431px;letter-spacing:-0.059px">NutstoreClient.exe</div>
<div class="c" style="left:565px;letter-spacing:0.070px">E:\<span style="font-size:12px">我的坚果云</span>\Test\<span style="font-size:12px">新建文本文档</span>.txt</div>
<div class="c" style="left:1181px;letter-spacing:0.150px">txt</div>
<div class="c" style="left:1251px;letter-spacing:-0.475px">8.2KB</div>
<div class="c" style="left:1321px;letter-spacing:-0.156px">2025-10-27 14:24:46</div>
</div>
<div class="row" style="top:749px;height:27px;overflow:hidden;background:#ffffff">
<div class="c" style="left:3px;letter-spacing:-0.375px">XuJin</div>
<div class="c" style="left:91px;letter-spacing:-0.200px">JasonTest</div>
<div class="c" style="left:231px;letter-spacing:-0.362px">192.168.91.140</div>
<svg class="lk" width="14" height="17" viewBox="0 0 14 17"><path d="M2.5 9V6A4 4 0 0 1 10.5 6V9" fill="none" stroke="#46a64b" stroke-width="2"/><rect x="0" y="8.5" width="13" height="8.5" fill="#46a64b"/><path d="M6.5 10.5l-1.7 2h1.05v3h1.3v-3h1.05z" fill="#fff"/></svg>
<div class="c" style="left:351px;font-size:12px">透明加密</div>
<div class="c" style="left:431px;letter-spacing:0.011px">Nutstore.COMLocal...</div>
<div class="c" style="left:565px;letter-spacing:-0.047px">C:\NSEC\Debug\Log\Nutstore.COMLocalServer.exe-user_2025-10-27.log</div>
<div class="c" style="left:1181px;letter-spacing:1.100px">log</div>
<div class="c" style="left:1251px;letter-spacing:-0.475px">8.2KB</div>
<div class="c" style="left:1321px;letter-spacing:-0.156px">2025-10-27 14:24:40</div>
</div>
<div class="row" style="top:776px;height:27px;overflow:hidden;background:#f9f9f9">
<div class="c" style="left:3px;letter-spacing:-0.225px">Cheng</div>
<div class="c" style="left:91px;letter-spacing:-0.275px">Cheng</div>
<div class="c" style="left:231px;letter-spacing:-0.325px">192.168.69.69</div>
<svg class="lk" width="14" height="17" viewBox="0 0 14 17"><path d="M2.5 9V6A4 4 0 0 1 10.5 6V9" fill="none" stroke="#46a64b" stroke-width="2"/><rect x="0" y="8.5" width="13" height="8.5" fill="#46a64b"/><path d="M6.5 10.5l-1.7 2h1.05v3h1.3v-3h1.05z" fill="#fff"/></svg>
<div class="c" style="left:351px;font-size:12px">透明加密</div>
<div class="c" style="left:431px;letter-spacing:-0.059px">NutstoreClient.exe</div>
<div class="c" style="left:565px;letter-spacing:-0.020px">C:\NSEC\Debug\Log\NutstoreClient.exe-user_2025-10-27.log</div>
<div class="c" style="left:1181px;letter-spacing:1.100px">log</div>
<div class="c" style="left:1251px;letter-spacing:0.700px">-</div>
<div class="c" style="left:1321px;letter-spacing:-0.156px">2025-10-27 13:21:16</div>
</div>
<div class="row" style="top:803px;height:27px;overflow:hidden;background:#ffffff">
<div class="c" style="left:3px;letter-spacing:-0.225px">Cheng</div>
<div class="c" style="left:91px;letter-spacing:-0.275px">Cheng</div>
<div class="c" style="left:231px;letter-spacing:-0.325px">192.168.69.69</div>
<svg class="lk" width="14" height="17" viewBox="0 0 14 17"><path d="M2.5 9V6A4 4 0 0 1 10.5 6V9" fill="none" stroke="#46a64b" stroke-width="2"/><rect x="0" y="8.5" width="13" height="8.5" fill="#46a64b"/><path d="M6.5 10.5l-1.7 2h1.05v3h1.3v-3h1.05z" fill="#fff"/></svg>
<div class="c" style="left:351px;font-size:12px">透明加密</div>
<div class="c" style="left:431px;letter-spacing:0.027px">Nutstore.exe</div>
<div class="c" style="left:565px;letter-spacing:-0.006px">C:\NSEC\Debug\Log\Nutstore.exe-user_2025-10-27.log</div>
<div class="c" style="left:1181px;letter-spacing:1.100px">log</div>
<div class="c" style="left:1251px;letter-spacing:0.700px">-</div>
<div class="c" style="left:1321px;letter-spacing:-0.156px">2025-10-27 13:21:14</div>
</div>
<div class="row" style="top:830px;height:22px;overflow:hidden;background:#f9f9f9">
<div class="c" style="left:3px;letter-spacing:-0.375px">XuJin</div>
<div class="c" style="left:91px;letter-spacing:-0.200px">JasonTest</div>
<div class="c" style="left:231px;letter-spacing:-0.362px">192.168.91.140</div>
<svg class="lk" width="14" height="17" viewBox="0 0 14 17"><path d="M2.5 9V6A4 4 0 0 1 10.5 6V9" fill="none" stroke="#46a64b" stroke-width="2"/><rect x="0" y="8.5" width="13" height="8.5" fill="#46a64b"/><path d="M6.5 10.5l-1.7 2h1.05v3h1.3v-3h1.05z" fill="#fff"/></svg>
<div class="c" style="left:351px;font-size:12px">透明加密</div>
<div class="c" style="left:431px;letter-spacing:0.026px">Nutstore.WindowsH...</div>
<div class="c" style="left:565px;letter-spacing:0.011px">C:\NSEC\Debug\Log\Nutstore.WindowsHook.exe-user_2025-10-27.log</div>
<div class="c" style="left:1181px;letter-spacing:1.100px">log</div>
<div class="c" style="left:1251px;letter-spacing:-0.475px">8.2KB</div>
<div class="c" style="left:1321px;letter-spacing:-0.156px">2025-10-27 12:55:45</div>
</div>
<svg class="a" style="left:0px;top:860px" width="180" height="7" viewBox="0 0 180 7">
<g fill="#a0a0a0"><rect x="2.2" y="0.6" width="1" height="5.4"/><path d="M7 0.6V6L4 3.3Z"/><path d="M10.6 0.6V6L7.6 3.3Z"/>
<path d="M22.6 0.6V6L19.6 3.3Z"/><path d="M26.2 0.6V6L23.2 3.3Z"/>
<path d="M40 1V5.6L37.4 3.3Z"/>
<path d="M140.4 1V5.6L143 3.3Z"/>
<path d="M153 0.6V6L156 3.3Z"/><path d="M156.6 0.6V6L159.6 3.3Z"/>
<path d="M167 0.6V6L170 3.3Z"/><path d="M170.6 0.6V6L173.6 3.3Z"/><rect x="174.6" y="0.6" width="1" height="5.4"/></g></svg>
<div class="t" style="left:55px;top:854px;font-size:13px;line-height:16px;color:#4a4a4a"><span style="font-size:12px">记录</span> 1 of 46</div>

<div class="a" style="left:0;top:873px;width:1446px;height:24px;background:#106ebe"></div>
<div class="t" style="left:7px;top:878px;font-size:12px;line-height:16px;color:#fff">就绪</div>
<svg class="a" style="left:1244px;top:877px" width="14" height="16" viewBox="0 0 14 16">
<path d="M7 0V10M2.5 5.5L7 10L11.5 5.5" fill="none" stroke="#5cb85c" stroke-width="2.2"/><rect x="0" y="13" width="14" height="2.5" fill="#5cb85c"/></svg>
<div class="t" style="left:1265px;top:877px;font-size:12px;line-height:16px;color:#fff">任务中心</div>
<svg class="a" style="left:1330px;top:880px" width="15" height="11" viewBox="0 0 15 11">
<rect x="0" y="0" width="15" height="11" fill="#fff"/><path d="M2.5 6.5H9M2.5 8.5H9" stroke="#106ebe" stroke-width="1"/><rect x="10" y="2" width="3" height="3" fill="#106ebe"/></svg>
<div class="t" style="left:1350px;top:877px;font-size:12px;line-height:16px;color:#fff">8728条未读信息</div>

</body></html>
